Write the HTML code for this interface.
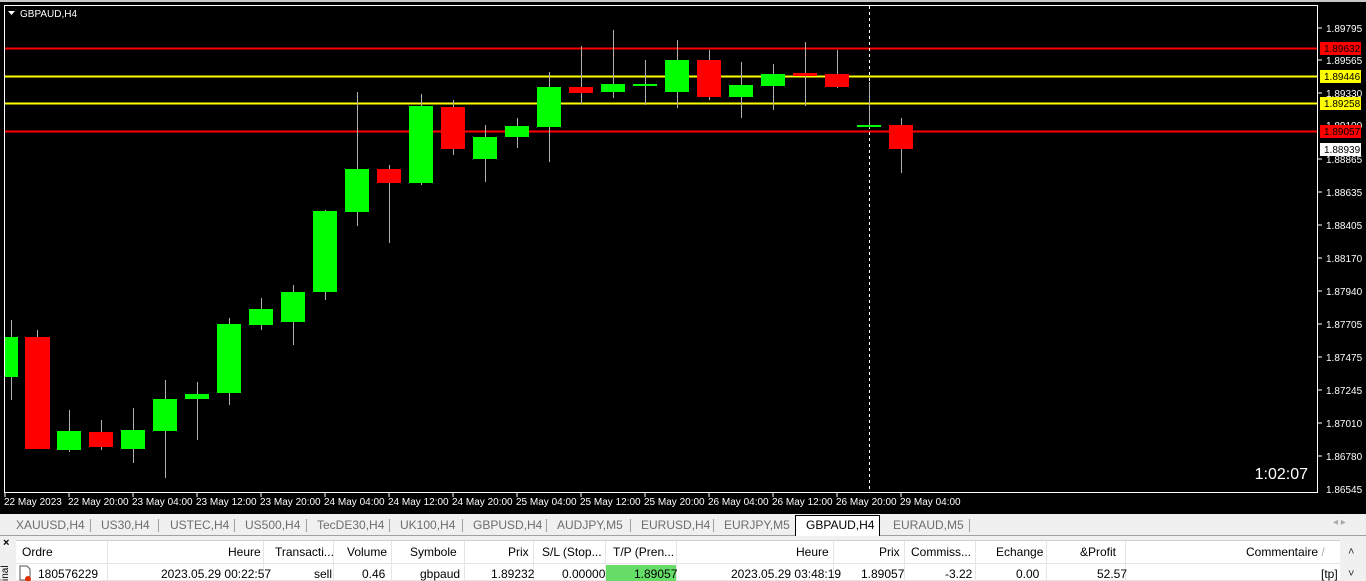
<!DOCTYPE html>
<html><head><meta charset="utf-8">
<style>
*{margin:0;padding:0;box-sizing:border-box}
body{width:1366px;height:581px;overflow:hidden;background:#f0f0f0;font-family:"Liberation Sans",sans-serif;position:relative}
.t{position:absolute;font-size:12px;color:#000;white-space:nowrap}
</style></head><body>
<svg width="1366" height="514" style="position:absolute;left:0;top:0" font-family="Liberation Sans, sans-serif">
<rect x="0" y="0" width="1366" height="514" fill="#000"/>
<rect x="0" y="0" width="1366" height="2" fill="#c8c8c8"/>
<rect x="4.5" y="5.5" width="1313" height="487" fill="none" stroke="#fff"/>
<polygon points="8,11 15,11 11.5,15" fill="#fff"/>
<text x="20" y="17" fill="#fff" font-size="10">GBPAUD,H4</text>
<line x1="5" y1="48.5" x2="1317" y2="48.5" stroke="#ff0000" stroke-width="2"/>
<line x1="5" y1="76.5" x2="1317" y2="76.5" stroke="#ffff00" stroke-width="2"/>
<line x1="5" y1="103.5" x2="1317" y2="103.5" stroke="#ffff00" stroke-width="2"/>
<line x1="5" y1="131.5" x2="1317" y2="131.5" stroke="#ff0000" stroke-width="2"/>
<line x1="869.5" y1="6" x2="869.5" y2="492" stroke="#fff" stroke-dasharray="3,3"/>
<g stroke="#b0b0b0" stroke-width="1">
<line x1="11.5" y1="320" x2="11.5" y2="400"/><line x1="37.5" y1="330" x2="37.5" y2="449"/>
<line x1="69.5" y1="410" x2="69.5" y2="452"/><line x1="101.5" y1="420" x2="101.5" y2="450"/>
<line x1="133.5" y1="408" x2="133.5" y2="463"/><line x1="165.5" y1="380" x2="165.5" y2="478"/>
<line x1="197.5" y1="382" x2="197.5" y2="440"/><line x1="229.5" y1="318" x2="229.5" y2="405"/>
<line x1="261.5" y1="298" x2="261.5" y2="330"/><line x1="293.5" y1="285" x2="293.5" y2="345"/>
<line x1="325.5" y1="210" x2="325.5" y2="300"/><line x1="357.5" y1="92" x2="357.5" y2="226"/>
<line x1="389.5" y1="165" x2="389.5" y2="243"/><line x1="421.5" y1="94" x2="421.5" y2="185"/>
<line x1="453.5" y1="100" x2="453.5" y2="155"/><line x1="485.5" y1="125" x2="485.5" y2="182"/>
<line x1="517.5" y1="118" x2="517.5" y2="148"/><line x1="549.5" y1="72" x2="549.5" y2="162"/>
<line x1="581.5" y1="46" x2="581.5" y2="104"/><line x1="613.5" y1="30" x2="613.5" y2="98"/>
<line x1="645.5" y1="60" x2="645.5" y2="105"/><line x1="677.5" y1="40" x2="677.5" y2="108"/>
<line x1="709.5" y1="50" x2="709.5" y2="100"/><line x1="741.5" y1="62" x2="741.5" y2="118"/>
<line x1="773.5" y1="64" x2="773.5" y2="110"/><line x1="805.5" y1="42" x2="805.5" y2="106"/>
<line x1="837.5" y1="50" x2="837.5" y2="88"/><line x1="869.5" y1="82" x2="869.5" y2="128"/>
<line x1="901.5" y1="118" x2="901.5" y2="173"/>
</g>
<g fill="#00ff00">
<rect x="5" y="337" width="13" height="40"/>
<rect x="57" y="431" width="24" height="19"/><rect x="121" y="430" width="24" height="19"/>
<rect x="153" y="399" width="24" height="32"/><rect x="185" y="394" width="24" height="5"/>
<rect x="217" y="324" width="24" height="69"/><rect x="249" y="309" width="24" height="16"/>
<rect x="281" y="292" width="24" height="30"/><rect x="313" y="211" width="24" height="81"/>
<rect x="345" y="169" width="24" height="43"/><rect x="409" y="106" width="24" height="77"/>
<rect x="473" y="137" width="24" height="22"/><rect x="505" y="126" width="24" height="11"/>
<rect x="537" y="87" width="24" height="40"/><rect x="601" y="84" width="24" height="8"/>
<rect x="633" y="84" width="24" height="2"/><rect x="665" y="60" width="24" height="32"/>
<rect x="729" y="85" width="24" height="12"/><rect x="761" y="74" width="24" height="12"/>
<rect x="857" y="125" width="24" height="2"/>
</g>
<g fill="#ff0000">
<rect x="25" y="337" width="25" height="112"/><rect x="89" y="432" width="24" height="15"/>
<rect x="377" y="169" width="24" height="14"/><rect x="441" y="107" width="24" height="42"/>
<rect x="569" y="87" width="24" height="6"/><rect x="697" y="60" width="24" height="37"/>
<rect x="793" y="73" width="24" height="3"/><rect x="825" y="74" width="24" height="13"/>
<rect x="889" y="125" width="24" height="24"/>
</g>
<g fill="#fff" font-size="10">
<text x="1326" y="32">1.89795</text><text x="1326" y="64">1.89565</text>
<text x="1326" y="97">1.89330</text><text x="1326" y="129">1.89100</text>
<text x="1326" y="163">1.88865</text><text x="1326" y="196">1.88635</text>
<text x="1326" y="229">1.88405</text><text x="1326" y="262">1.88170</text>
<text x="1326" y="295">1.87940</text><text x="1326" y="328">1.87705</text>
<text x="1326" y="361">1.87475</text><text x="1326" y="394">1.87245</text>
<text x="1326" y="427">1.87010</text><text x="1326" y="460">1.86780</text>
<text x="1326" y="493">1.86545</text>
</g>
<g stroke="#fff"><line x1="1318" y1="28" x2="1322" y2="28"/><line x1="1318" y1="60" x2="1322" y2="60"/><line x1="1318" y1="93" x2="1322" y2="93"/><line x1="1318" y1="159" x2="1322" y2="159"/><line x1="1318" y1="192" x2="1322" y2="192"/><line x1="1318" y1="225" x2="1322" y2="225"/><line x1="1318" y1="258" x2="1322" y2="258"/><line x1="1318" y1="291" x2="1322" y2="291"/><line x1="1318" y1="324" x2="1322" y2="324"/><line x1="1318" y1="357" x2="1322" y2="357"/><line x1="1318" y1="390" x2="1322" y2="390"/><line x1="1318" y1="423" x2="1322" y2="423"/><line x1="1318" y1="456" x2="1322" y2="456"/></g>
<rect x="1320" y="42" width="41" height="13" fill="#ff0000"/><text x="1324" y="52" font-size="10" fill="#000">1.89632</text>
<rect x="1320" y="70" width="41" height="13" fill="#ffff00"/><text x="1324" y="80" font-size="10" fill="#000">1.89446</text>
<rect x="1320" y="97" width="41" height="13" fill="#ffff00"/><text x="1324" y="107" font-size="10" fill="#000">1.89258</text>
<rect x="1320" y="125" width="41" height="13" fill="#ff0000"/><text x="1324" y="135" font-size="10" fill="#000">1.89057</text>
<rect x="1320" y="143" width="41" height="13" fill="#fff"/><text x="1324" y="153" font-size="10" fill="#000">1.88939</text>
<text x="1308" y="479" font-size="16" fill="#fff" text-anchor="end">1:02:07</text>
<g stroke="#fff"><line x1="5" y1="493" x2="5" y2="497"/><line x1="69" y1="493" x2="69" y2="497"/><line x1="133" y1="493" x2="133" y2="497"/><line x1="197" y1="493" x2="197" y2="497"/><line x1="261" y1="493" x2="261" y2="497"/><line x1="325" y1="493" x2="325" y2="497"/><line x1="389" y1="493" x2="389" y2="497"/><line x1="453" y1="493" x2="453" y2="497"/><line x1="517" y1="493" x2="517" y2="497"/><line x1="581" y1="493" x2="581" y2="497"/><line x1="645" y1="493" x2="645" y2="497"/><line x1="709" y1="493" x2="709" y2="497"/><line x1="773" y1="493" x2="773" y2="497"/><line x1="837" y1="493" x2="837" y2="497"/><line x1="901" y1="493" x2="901" y2="497"/></g>
<g fill="#fff" font-size="10">
<text x="4" y="505">22 May 2023</text><text x="68" y="505">22 May 20:00</text><text x="132" y="505">23 May 04:00</text>
<text x="196" y="505">23 May 12:00</text><text x="260" y="505">23 May 20:00</text><text x="324" y="505">24 May 04:00</text>
<text x="388" y="505">24 May 12:00</text><text x="452" y="505">24 May 20:00</text><text x="516" y="505">25 May 04:00</text>
<text x="580" y="505">25 May 12:00</text><text x="644" y="505">25 May 20:00</text><text x="708" y="505">26 May 04:00</text>
<text x="772" y="505">26 May 12:00</text><text x="836" y="505">26 May 20:00</text><text x="900" y="505">29 May 04:00</text>
</g>
</svg>
<div style="position:absolute;left:0;top:514px;width:1366px;height:22px;background:#f0f0f0;border-bottom:1px solid #a0a0a0"></div>
<div style="position:absolute;left:0;top:514px;width:1366px;height:22px">
<span class="t" style="left:16px;top:4px;color:#6d6d6d">XAUUSD,H4</span>
<span class="t" style="left:101px;top:4px;color:#6d6d6d">US30,H4</span>
<span class="t" style="left:170px;top:4px;color:#6d6d6d">USTEC,H4</span>
<span class="t" style="left:245px;top:4px;color:#6d6d6d">US500,H4</span>
<span class="t" style="left:317px;top:4px;color:#6d6d6d">TecDE30,H4</span>
<span class="t" style="left:400px;top:4px;color:#6d6d6d">UK100,H4</span>
<span class="t" style="left:473px;top:4px;color:#6d6d6d">GBPUSD,H4</span>
<span class="t" style="left:557px;top:4px;color:#6d6d6d">AUDJPY,M5</span>
<span class="t" style="left:641px;top:4px;color:#6d6d6d">EURUSD,H4</span>
<span class="t" style="left:724px;top:4px;color:#6d6d6d">EURJPY,M5</span>
<div style="position:absolute;left:795px;top:1px;width:85px;height:21px;background:#fff;border:1px solid #000;border-bottom:none"></div>
<span class="t" style="left:806px;top:4px">GBPAUD,H4</span>
<span class="t" style="left:893px;top:4px;color:#6d6d6d">EURAUD,M5</span>
<span class="t" style="left:1333px;top:3px;color:#aaa;font-size:10px">◂ ▸</span>
</div>
<svg width="1366" height="22" style="position:absolute;left:0;top:514px"><g stroke="#a0a0a0"><line x1="90.5" y1="5" x2="90.5" y2="18"/><line x1="158.5" y1="5" x2="158.5" y2="18"/><line x1="234.5" y1="5" x2="234.5" y2="18"/><line x1="306.5" y1="5" x2="306.5" y2="18"/><line x1="389.5" y1="5" x2="389.5" y2="18"/><line x1="462.5" y1="5" x2="462.5" y2="18"/><line x1="546.5" y1="5" x2="546.5" y2="18"/><line x1="630.5" y1="5" x2="630.5" y2="18"/><line x1="713.5" y1="5" x2="713.5" y2="18"/><line x1="969.5" y1="5" x2="969.5" y2="18"/></g></svg>
<div style="position:absolute;left:0;top:537px;width:15px;height:44px;background:#f0f0f0"><span class="t" style="left:3px;top:0;font-size:11px;font-weight:bold">×</span><span class="t" style="left:0;font-size:10px;transform:rotate(-90deg);transform-origin:left top;top:44px">inal</span></div>
<div style="position:absolute;left:16px;top:540px;width:1324px;height:41px;background:#fff;border-top:1px solid #d0d0d0"></div>
<svg width="1366" height="44" style="position:absolute;left:0;top:537px"><g stroke="#e5e5e5"><line x1="16" y1="26.5" x2="1340" y2="26.5"/><line x1="16" y1="43.5" x2="1340" y2="43.5"/><line x1="107.5" y1="4" x2="107.5" y2="44"/><line x1="263.5" y1="4" x2="263.5" y2="44"/><line x1="333.5" y1="4" x2="333.5" y2="44"/><line x1="391.5" y1="4" x2="391.5" y2="44"/><line x1="464.5" y1="4" x2="464.5" y2="44"/><line x1="533.5" y1="4" x2="533.5" y2="44"/><line x1="605.5" y1="4" x2="605.5" y2="44"/><line x1="676.5" y1="4" x2="676.5" y2="44"/><line x1="833.5" y1="4" x2="833.5" y2="44"/><line x1="904.5" y1="4" x2="904.5" y2="44"/><line x1="975.5" y1="4" x2="975.5" y2="44"/><line x1="1046.5" y1="4" x2="1046.5" y2="44"/><line x1="1125.5" y1="4" x2="1125.5" y2="44"/></g>
<rect x="606" y="28" width="70" height="16" fill="#66dd66"/>
<path d="M20 29h7l3 3v11h-10z" fill="#fff" stroke="#555"/><circle cx="28" cy="42" r="3" fill="#e03000"/>
<rect x="1340" y="4" width="26" height="40" fill="#f0f0f0"/><text x="1348" y="18" font-size="11" fill="#333">˄</text><text x="1348" y="40" font-size="11" fill="#333">˅</text></svg>
<span class="t" style="left:22px;top:545px">Ordre</span>
<span class="t" style="left:228px;top:545px">Heure</span>
<span class="t" style="left:275px;top:545px">Transacti...</span>
<span class="t" style="left:347px;top:545px">Volume</span>
<span class="t" style="left:410px;top:545px">Symbole</span>
<span class="t" style="left:508px;top:545px">Prix</span>
<span class="t" style="left:542px;top:545px">S/L (Stop...</span>
<span class="t" style="left:613px;top:545px">T/P (Pren...</span>
<span class="t" style="left:796px;top:545px">Heure</span>
<span class="t" style="left:879px;top:545px">Prix</span>
<span class="t" style="left:911px;top:545px">Commiss...</span>
<span class="t" style="left:996px;top:545px">Echange</span>
<span class="t" style="left:1080px;top:545px">&amp;Profit</span>
<span class="t" style="left:1246px;top:545px">Commentaire <span style="color:#aaa">/</span></span>
<span class="t" style="left:38px;top:567px">180576229</span>
<span class="t" style="left:161px;top:567px">2023.05.29 00:22:57</span>
<span class="t" style="left:314px;top:567px">sell</span>
<span class="t" style="left:362px;top:567px">0.46</span>
<span class="t" style="left:420px;top:567px">gbpaud</span>
<span class="t" style="left:491px;top:567px">1.89232</span>
<span class="t" style="left:562px;top:567px">0.00000</span>
<span class="t" style="left:634px;top:567px">1.89057</span>
<span class="t" style="left:731px;top:567px">2023.05.29 03:48:19</span>
<span class="t" style="left:861px;top:567px">1.89057</span>
<span class="t" style="left:945px;top:567px">-3.22</span>
<span class="t" style="left:1016px;top:567px">0.00</span>
<span class="t" style="left:1097px;top:567px">52.57</span>
<span class="t" style="left:1321px;top:567px">[tp]</span>
</body></html>
